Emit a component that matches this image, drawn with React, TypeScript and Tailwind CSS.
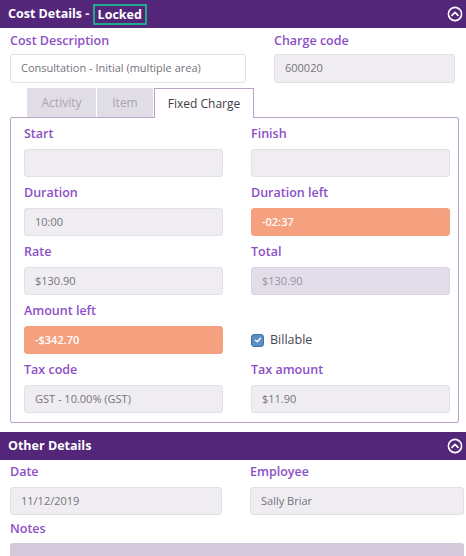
import React from 'react';

const font = { fontFamily: '"Open Sans", "Noto Sans", Arial, sans-serif' };

const ChevronCircle: React.FC = () => (
  <svg width="16" height="16" viewBox="0 0 16 16" fill="none">
    <circle cx="8" cy="8" r="6.6" stroke="white" strokeWidth="1.6" />
    <path d="M5 9.4 L8 6.4 L11 9.4" stroke="white" strokeWidth="1.8" strokeLinecap="round" strokeLinejoin="round" />
  </svg>
);

interface FieldProps {
  label: string;
  value?: string;
  tone?: 'gray' | 'white' | 'orange' | 'mauve';
}

const toneClass = {
  gray: 'bg-[#efedf2] border-[#e2dfe6] text-[#76737a]',
  white: 'bg-white border-[#e4e1e8] text-[#76737a]',
  orange: 'bg-[#f5a07f] border-[#f5a07f] text-white font-semibold',
  mauve: 'bg-[#e3dce9] border-[#d9d1e1] text-[#99939f]',
};

const labelClass = 'text-[12.5px] leading-[18px] font-semibold text-[#8c4fc6]';

const Field: React.FC<FieldProps> = ({ label, value = '', tone = 'gray' }) => (
  <div className="flex flex-col">
    <label className={labelClass}>{label}</label>
    <div className={`mt-[6px] h-[28px] rounded-[3px] border flex items-center px-[10px] text-[11px] ${toneClass[tone]}`}>
      {value}
    </div>
  </div>
);

const SectionHeader: React.FC<{ children: React.ReactNode }> = ({ children }) => (
  <div className="h-[28px] bg-[#54267a] flex items-center justify-between pl-[8px] pr-[3px]">
    <div className="text-white text-[12.5px] font-bold flex items-center">{children}</div>
    <ChevronCircle />
  </div>
);

export default function App() {
  return (
    <div className="w-[466px] h-[556px] bg-white overflow-hidden" style={font}>
      <SectionHeader>
        <span>Cost Details -&nbsp;</span>
        <span className="border-2 border-[#22a88f] px-[3px] py-[1px] leading-[15px]">Locked</span>
      </SectionHeader>

      <div className="px-[10px] pt-[4px]">
        <div className="grid grid-cols-[236px_181px] gap-x-[28px]">
          <div className="flex flex-col">
            <label className={labelClass}>Cost Description</label>
            <div className="mt-[4px] h-[29px] rounded-[3px] border border-[#e4e1e8] bg-white flex items-center px-[10px] text-[11px] text-[#76737a]">
              Consultation - Initial (multiple area)
            </div>
          </div>
          <div className="flex flex-col">
            <label className={labelClass}>Charge code</label>
            <div className="mt-[4px] h-[29px] rounded-[3px] border border-[#e2dfe6] bg-[#efedf2] flex items-center px-[10px] text-[11px] text-[#76737a]">
              600020
            </div>
          </div>
        </div>

        <div className="mt-[5px] flex pl-[17px] h-[29px] relative z-10">
          <div className="w-[69px] bg-[#e1dde6] text-[#aaa3b3] text-[12px] flex items-center justify-center">Activity</div>
          <div className="w-[56px] ml-px bg-[#e1dde6] text-[#aaa3b3] text-[12px] flex items-center justify-center">Item</div>
          <div className="w-[100px] ml-px bg-white border border-b-0 border-[#b9a3cb] text-[#3f3b45] text-[12px] flex items-center justify-center h-[30px]">Fixed Charge</div>
        </div>

        <div className="w-[449px] border border-[#b9a3cb] rounded-[2px] pl-[13px] pr-[8px] pt-[7px] pb-[9px] grid grid-cols-2 gap-x-[28px] gap-y-[7px]">
          <Field label="Start" />
          <Field label="Finish" />
          <Field label="Duration" value="10:00" />
          <Field label="Duration left" value="-02:37" tone="orange" />
          <Field label="Rate" value="$130.90" />
          <Field label="Total" value="$130.90" tone="mauve" />
          <Field label="Amount left" value="-$342.70" tone="orange" />
          <div className="flex items-end h-[52px]">
            <div className="h-[28px] flex items-center gap-[6px]">
              <span className="w-[13px] h-[13px] rounded-[3px] bg-[#5a8ec4] border border-[#3f73a8] flex items-center justify-center">
                <svg width="8" height="8" viewBox="0 0 8 8" fill="none">
                  <path d="M1.5 4.2 L3.3 5.8 L6.5 2.2" stroke="white" strokeWidth="1.4" strokeLinecap="round" strokeLinejoin="round" />
                </svg>
              </span>
              <span className="text-[12.5px] text-[#4a4650]">Billable</span>
            </div>
          </div>
          <Field label="Tax code" value="GST - 10.00% (GST)" />
          <Field label="Tax amount" value="$11.90" />
        </div>
      </div>

      <div className="mt-[9px]">
        <SectionHeader>Other Details</SectionHeader>
      </div>

      <div className="pl-[10px] pr-[2px] pt-[3px] grid grid-cols-[212px_214px] gap-x-[28px] gap-y-[5px]">
        <Field label="Date" value="11/12/2019" />
        <Field label="Employee" value="Sally Briar" />
        <div className="col-span-2 flex flex-col">
          <label className={labelClass}>Notes</label>
          <div className="mt-[5px] h-[40px] rounded-[3px] bg-[#d2c9da]" />
        </div>
      </div>
    </div>
  );
}
